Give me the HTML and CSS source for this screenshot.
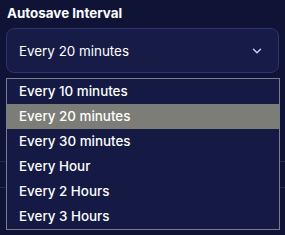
FILE: index.html
```html
<!DOCTYPE html>
<html lang="en">
<head>
    <meta charset="UTF-8">
    <title>Autosave Interval</title>
    <link rel="stylesheet" href="styles.css">
</head>
<body>
    <div class="setting">
        <label class="label">Autosave Interval</label>
        <div class="select">
            <span>Every 20 minutes</span>
            <svg class="chevron" width="10" height="6" viewBox="0 0 10 6">
                <path d="M1.5 1.2l3.5 3.5 3.5-3.5" fill="none" stroke="#c9cce2" stroke-width="1.5" stroke-linecap="round" stroke-linejoin="round"/>
            </svg>
        </div>
        <div class="behind">
            <div class="behind-row"></div>
            <div class="behind-row"></div>
        </div>
        <ul class="options">
            <li>Every 10 minutes</li>
            <li class="selected">Every 20 minutes</li>
            <li>Every 30 minutes</li>
            <li>Every Hour</li>
            <li>Every 2 Hours</li>
            <li>Every 3 Hours</li>
        </ul>
    </div>
</body>
</html>
```

FILE: styles.css
```css
html, body {
    min-height: 235px;
}
body {
    margin: 0;
    background-color: #0f1436;
    font-family: Inter, "Noto Sans", sans-serif;
    color: #ffffff;
}
.setting {
    position: relative;
    min-height: 235px;
    padding: 4px 6px 0 6px;
    box-sizing: border-box;
}
.label {
    display: block;
    padding-left: 1px;
    font-size: 13.4px;
    font-weight: 700;
    line-height: 18px;
    margin-bottom: 6px;
}
.select {
    display: flex;
    align-items: center;
    justify-content: space-between;
    height: 43px;
    padding: 0 16px 0 12px;
    border: 1px solid #2b3374;
    border-radius: 8px;
    background-color: #161c46;
    font-size: 13.4px;
}
.chevron {
    margin-top: 1px;
}
.behind {
    padding-top: 88px;
    margin: 0 -6px;
}
.behind-row {
    height: 25px;
    border-top: 1px solid #222a58;
}
.options {
    position: absolute;
    top: 78px;
    left: 6px;
    right: 5px;
    margin: 0;
    padding: 0;
    list-style: none;
    border: 1px solid #777c8e;
    background-color: #141a43;
}
.options li {
    height: 25px;
    line-height: 24px;
    padding-left: 12px;
    font-size: 13.4px;
    font-weight: 500;
}
.options li.selected {
    background-color: #7d7d78;
}
```
